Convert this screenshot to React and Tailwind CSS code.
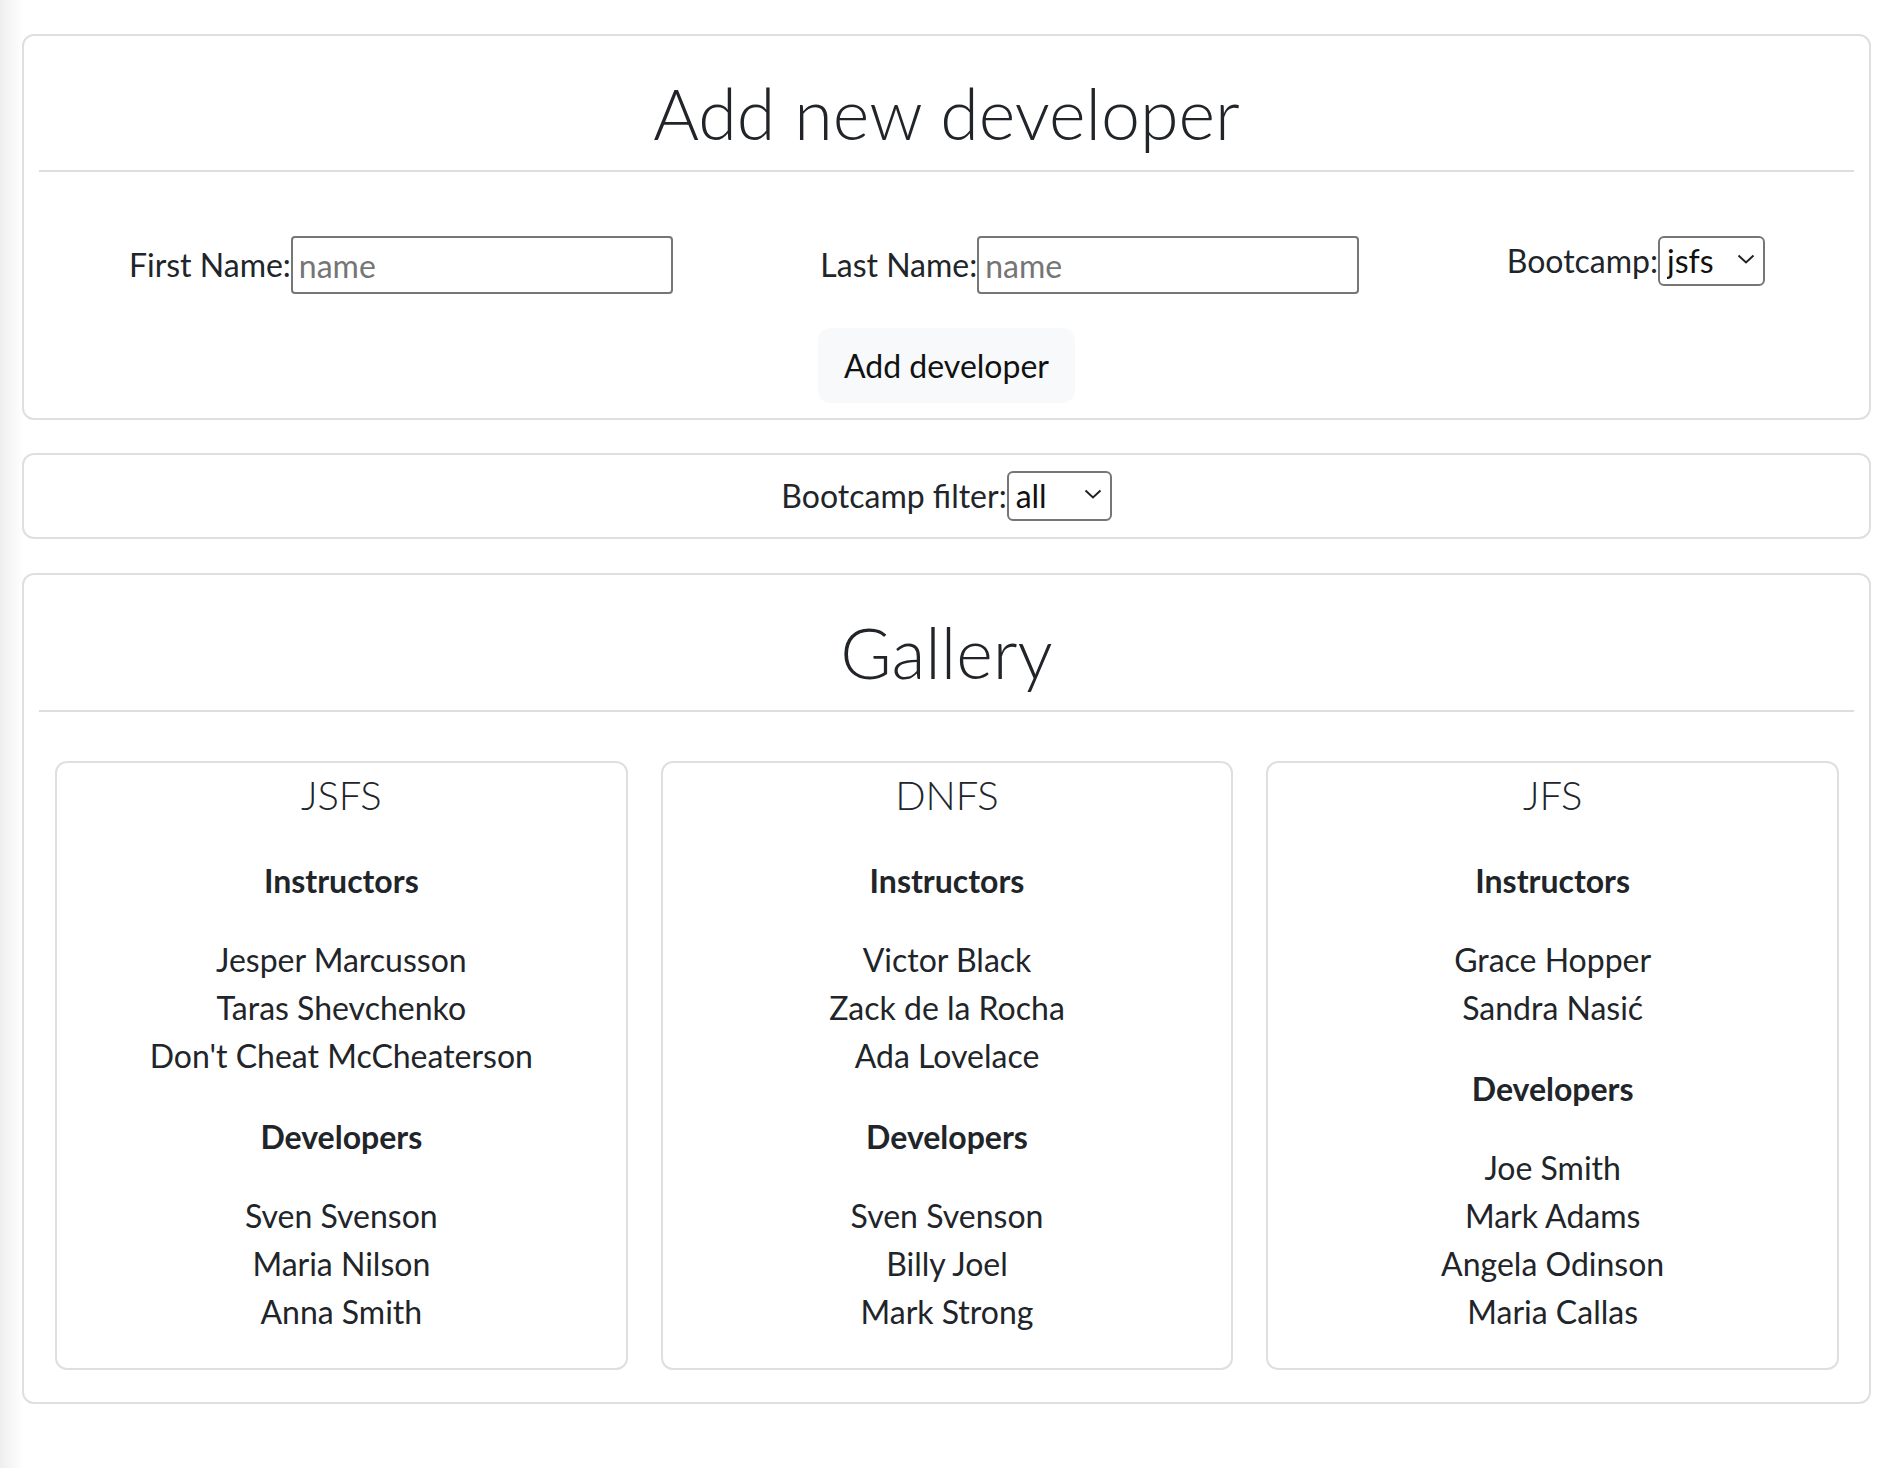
const bootcamps = [
  {
    title: 'JSFS',
    instructors: ['Jesper Marcusson', 'Taras Shevchenko', "Don't Cheat McCheaterson"],
    developers: ['Sven Svenson', 'Maria Nilson', 'Anna Smith'],
  },
  {
    title: 'DNFS',
    instructors: ['Victor Black', 'Zack de la Rocha', 'Ada Lovelace'],
    developers: ['Sven Svenson', 'Billy Joel', 'Mark Strong'],
  },
  {
    title: 'JFS',
    instructors: ['Grace Hopper', 'Sandra Nasić'],
    developers: ['Joe Smith', 'Mark Adams', 'Angela Odinson', 'Maria Callas'],
  },
];

function Select({ value, options, width }) {
  return (
    <div className={`relative ${width} h-[50px]`}>
      <select
        defaultValue={value}
        className="appearance-none w-full h-full border-2 border-[#767676] rounded-[6px] pl-[7px] pr-[30px] text-[32px] leading-[40px] bg-white text-[#111]"
      >
        {options.map((o) => (
          <option key={o} value={o}>{o}</option>
        ))}
      </select>
      {/* chevron drawn over the native select */}
      <svg
        width="18"
        height="10"
        viewBox="0 0 18 10"
        className="absolute right-[10px] top-[18px] pointer-events-none"
      >
        <polyline points="1.5,1.5 9,8.5 16.5,1.5" fill="none" stroke="#222" strokeWidth="2" />
      </svg>
    </div>
  );
}

function Field({ label }) {
  return (
    <div className="flex items-center">
      <label className="text-[32px] leading-[48px]">{label}</label>
      <input
        placeholder="name"
        className="w-[382px] h-[58px] border-2 border-[#767676] rounded-[4px] px-[6px] text-[32px] placeholder:text-[#757575] bg-white"
      />
    </div>
  );
}

function BootcampCard({ bootcamp }) {
  return (
    <div className="border-2 border-[#dfdfdf] rounded-[12px] text-center pt-[8px] pb-[32px]">
      <h5 className="text-[40px] leading-[48px] font-light">{bootcamp.title}</h5>
      <h6 className="mt-[43px] text-[32px] leading-[38px] font-bold">Instructors</h6>
      <ul className="mt-[36px] text-[32px] leading-[48px]">
        {bootcamp.instructors.map((n) => (
          <li key={n}>{n}</li>
        ))}
      </ul>
      <h6 className="mt-[38px] text-[32px] leading-[38px] font-bold">Developers</h6>
      <ul className="mt-[36px] text-[32px] leading-[48px]">
        {bootcamp.developers.map((n) => (
          <li key={n}>{n}</li>
        ))}
      </ul>
    </div>
  );
}

export default function App() {
  return (
    <div className="min-h-[1468px] w-full bg-[linear-gradient(90deg,#eeeeee_0px,#f6f6f6_10px,#ffffff_24px)] text-[#212529] font-['Lato',sans-serif] pt-[34px] pl-[22px] pr-[21px] pb-[56px]">
      {/* Add developer form */}
      <div className="border-2 border-[#dfdfdf] rounded-[12px] bg-white/60 pb-[15px]">
        <div className="px-[15px] pt-[35px]">
          <h1 className="text-[70px] leading-[84px] font-light text-center">Add new developer</h1>
          <hr className="mt-[15px] border-t-2 border-[#dedede]" />
        </div>
        <div className="flex items-start justify-between pl-[105px] pr-[104px] mt-[64px]">
          <Field label="First Name:" />
          <Field label="Last Name:" />
          <div className="flex items-center h-[50px]">
            <label className="text-[32px] leading-[48px]">Bootcamp:</label>
            <Select value="jsfs" options={['jsfs', 'dnfs', 'jfs']} width="w-[107px]" />
          </div>
        </div>
        <div className="flex justify-center mt-[34px]">
          <button className="w-[257px] h-[75px] rounded-[12px] bg-[#f8f9fa] text-[32px] text-[#111]">
            Add developer
          </button>
        </div>
      </div>

      {/* Filter */}
      <div className="mt-[33px] border-2 border-[#dfdfdf] rounded-[12px] bg-white/60 py-[16px] flex justify-center items-center">
        <label className="text-[32px] leading-[48px]">Bootcamp filter:</label>
        <Select value="all" options={['all', 'jsfs', 'dnfs', 'jfs']} width="w-[105px]" />
      </div>

      {/* Gallery */}
      <div className="mt-[34px] border-2 border-[#dfdfdf] rounded-[12px] bg-white/60 pb-[32px]">
        <div className="px-[15px] pt-[35px]">
          <h1 className="text-[70px] leading-[84px] font-light text-center">Gallery</h1>
          <hr className="mt-[16px] border-t-2 border-[#dedede]" />
        </div>
        <div className="grid grid-cols-3 gap-[33px] pl-[31px] pr-[30px] mt-[49px]">
          {bootcamps.map((b) => (
            <BootcampCard key={b.title} bootcamp={b} />
          ))}
        </div>
      </div>
    </div>
  );
}
